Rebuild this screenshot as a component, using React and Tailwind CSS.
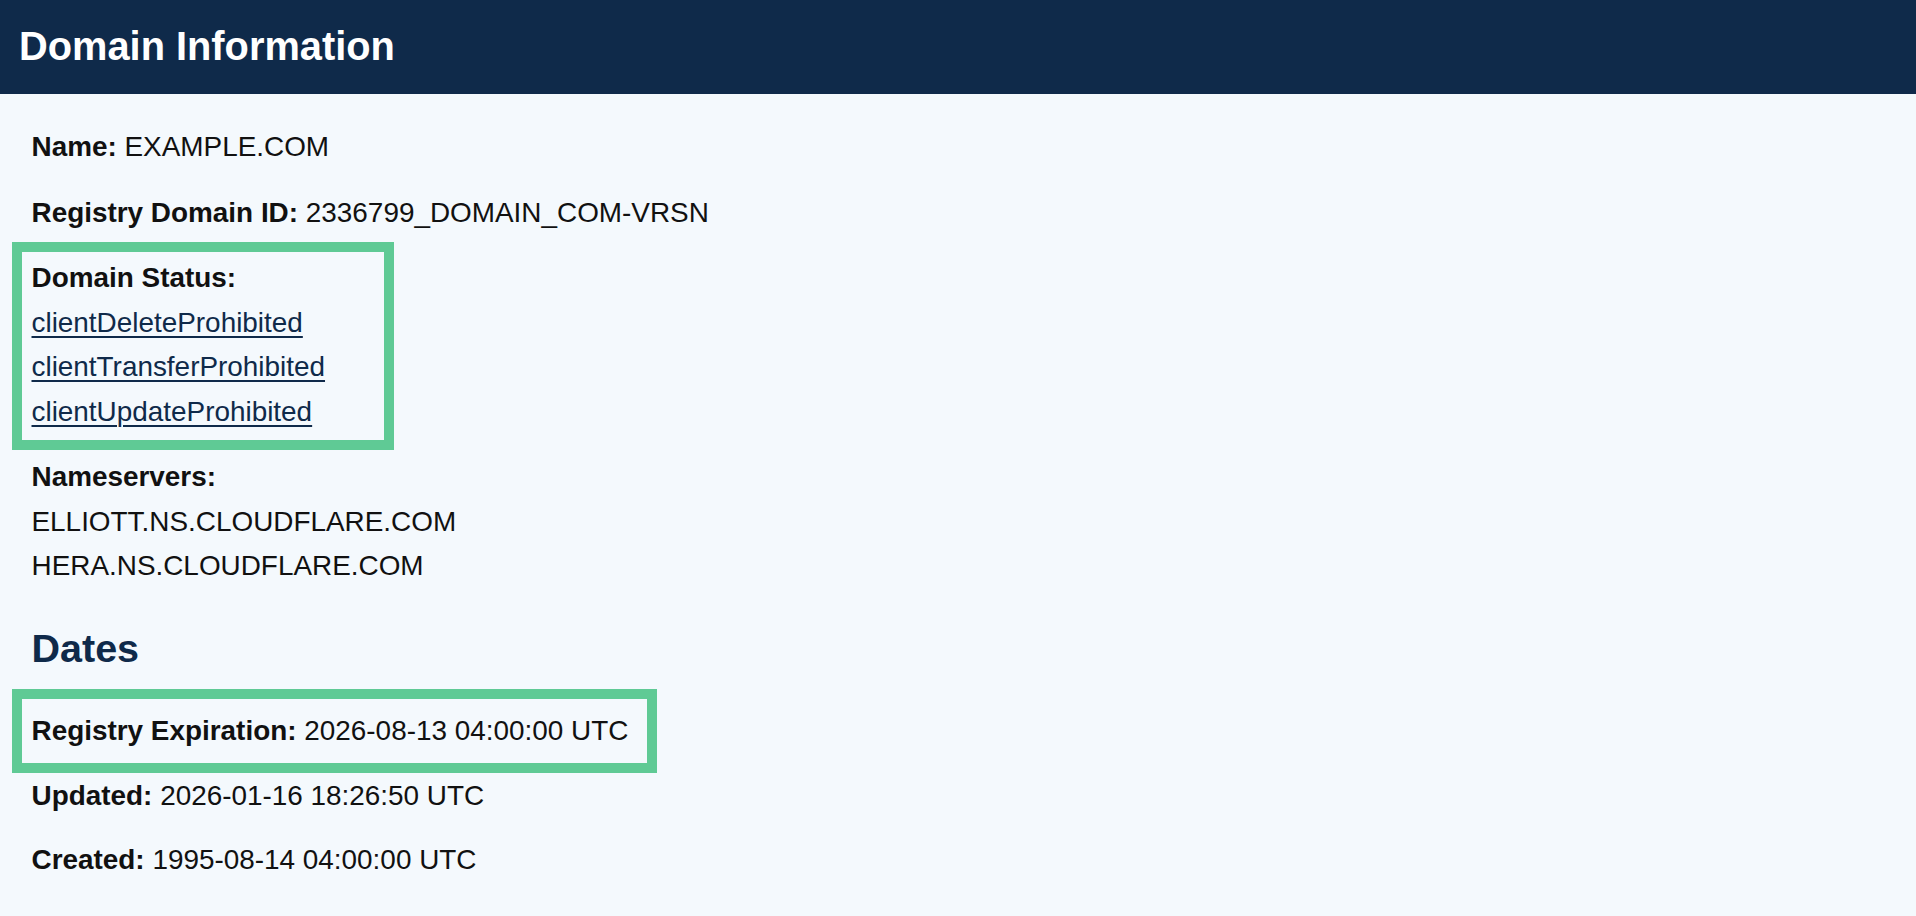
export default function App() {
  const font = { fontFamily: '"Liberation Sans", Arial, Helvetica, sans-serif' };

  const Field = ({ label, value, className = "" }) => (
    <p className={`leading-[44px] ${className}`}>
      <strong className="font-bold">{label}:</strong> {value}
    </p>
  );

  return (
    <div className="relative min-h-[916px] bg-[#f4f9fd] text-[#111111]" style={font}>
      <header className="flex h-[94px] items-center bg-[#0f2a4a] px-[19px]">
        <h1 className="text-[39.8px] font-bold leading-none text-white">Domain Information</h1>
      </header>

      <main className="px-[31.5px] pt-[31px] text-[27.9px]">
        <Field label="Name" value="EXAMPLE.COM" className="mb-[22px]" />
        <Field label="Registry Domain ID" value="2336799_DOMAIN_COM-VRSN" className="mb-[21px]" />

        <div className="mb-[21px] leading-[44.5px]">
          <strong className="block font-bold">Domain Status:</strong>
          {["clientDeleteProhibited", "clientTransferProhibited", "clientUpdateProhibited"].map((s) => (
            <a
              key={s}
              href="#"
              className="block text-[#0f2a4a] underline decoration-[2px] underline-offset-[4px]"
            >
              {s}
            </a>
          ))}
        </div>

        <div className="leading-[44.5px]">
          <strong className="block font-bold">Nameservers:</strong>
          <div>ELLIOTT.NS.CLOUDFLARE.COM</div>
          <div>HERA.NS.CLOUDFLARE.COM</div>
        </div>

        <h2 className="mt-[35px] mb-[37px] text-[39.5px] font-bold leading-[48px] text-[#0f2a4a]">Dates</h2>

        <Field label="Registry Expiration" value="2026-08-13 04:00:00 UTC" className="mb-[21px]" />
        <Field label="Updated" value="2026-01-16 18:26:50 UTC" className="mb-[20px]" />
        <Field label="Created" value="1995-08-14 04:00:00 UTC" />
      </main>

      {/* highlight frames drawn over the status list and the expiry date */}
      <div className="pointer-events-none absolute left-[12px] top-[242px] h-[208px] w-[382px] border-[10px] border-[#5fca95]" />
      <div className="pointer-events-none absolute left-[12px] top-[689px] h-[84px] w-[645px] border-[10px] border-[#5fca95]" />
    </div>
  );
}
